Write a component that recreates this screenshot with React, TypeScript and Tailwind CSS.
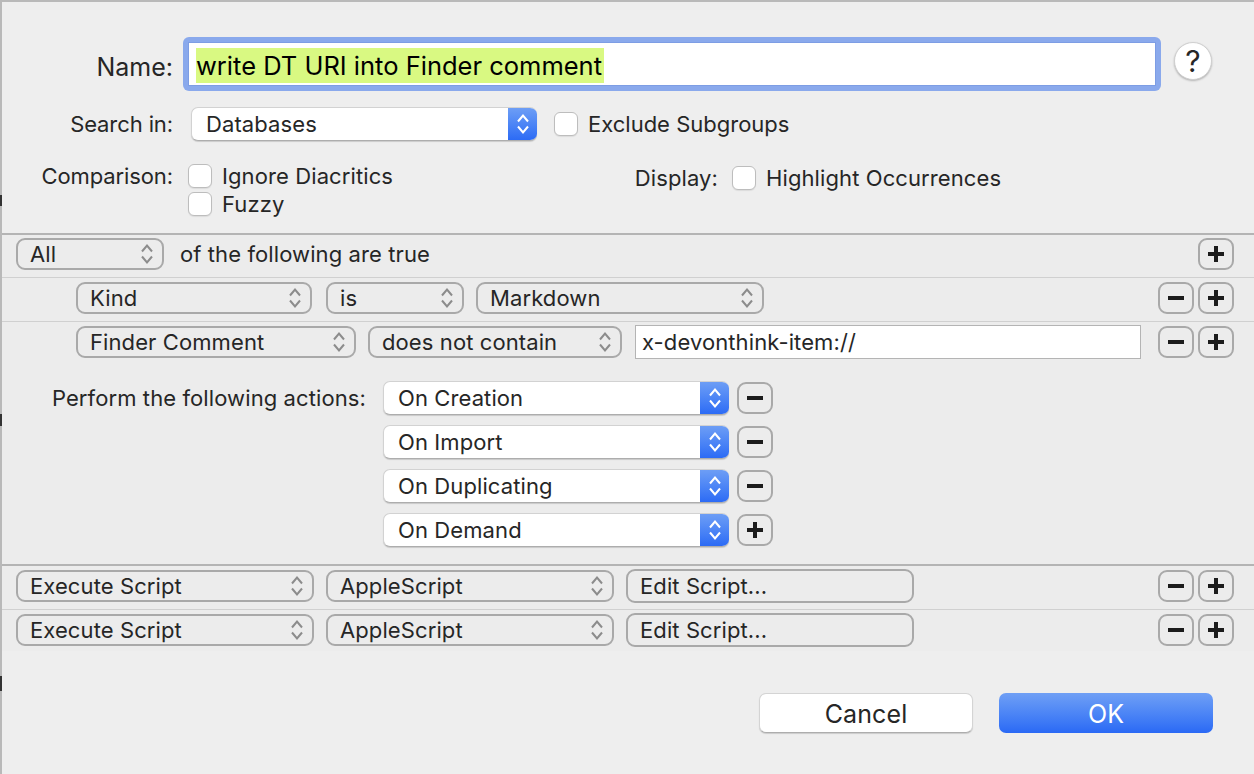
import React from 'react';

function Chevrons({ color = '#8c8c8c', strokeWidth = 2 }: { color?: string; strokeWidth?: number }) {
  return (
    <svg width="14" height="24" viewBox="0 0 14 24" fill="none" stroke={color} strokeWidth={strokeWidth}>
      <path d="M2 9.5 L7 3.5 L12 9.5" />
      <path d="M2 14.5 L7 20.5 L12 14.5" />
    </svg>
  );
}

function Select({ label, className }: { label: string; className: string }) {
  return (
    <div className={`h-[32px] border-2 border-[#a9a9a9] rounded-[9px] flex items-center justify-between pl-[12px] pr-[8px] ${className}`}>
      <span>{label}</span>
      <Chevrons />
    </div>
  );
}

function BlueSelect({ label }: { label: string }) {
  return (
    <div className="w-[346px] h-[34px] rounded-[7px] bg-white flex items-center justify-between border border-r-0 border-[#d2d2d2] border-b-[#adadad] shadow-[0_1px_1px_rgba(0,0,0,0.15)] overflow-hidden pl-[14px]">
      <span>{label}</span>
      <div className="w-[29px] h-[34px] bg-gradient-to-b from-[#6f9ff5] to-[#2a69f5] flex items-center justify-center">
        <Chevrons color="#ffffff" />
      </div>
    </div>
  );
}

function SmallBtn({ kind }: { kind: 'plus' | 'minus' }) {
  return (
    <div className="w-[36px] h-[32px] border-2 border-[#a9a9a9] rounded-[9px] flex items-center justify-center">
      <svg width="16" height="16" viewBox="0 0 16 16" fill="#1c1c1c">
        <rect x="0" y="6" width="16" height="4" />
        {kind === 'plus' && <rect x="6" y="0" width="4" height="16" />}
      </svg>
    </div>
  );
}

function Check({ label, className = '' }: { label: string; className?: string }) {
  return (
    <div className={`flex items-center h-[24px] ${className}`}>
      <div className="w-[24px] h-[24px] rounded-[6px] bg-white border border-[#bdbdbd] shadow-[0_1px_1px_rgba(0,0,0,0.08)]" />
      <span className="ml-[10px]">{label}</span>
    </div>
  );
}

function PlusMinus() {
  return (
    <div className="ml-auto flex gap-[4px]">
      <SmallBtn kind="minus" />
      <SmallBtn kind="plus" />
    </div>
  );
}

function EditBtn() {
  return (
    <div className="w-[288px] h-[34px] border-2 border-[#a9a9a9] rounded-[9px] flex items-center pl-[12px] ml-[12px]">
      Edit Script...
    </div>
  );
}

export default function App() {
  return (
    <div className="relative w-[1254px] h-[774px] bg-[#eeeeee] border-t-2 border-l-2 border-[#b9b9b9] text-[#262626] text-[22px] leading-none font-['Inter',sans-serif] tracking-[0.1px]">
      {/* bits of the window behind the sheet */}
      <div className="absolute left-[-2px] top-[193px] w-[2px] h-[11px] bg-[#333333]" />
      <div className="absolute left-[-2px] top-[412px] w-[2px] h-[12px] bg-[#333333]" />
      <div className="absolute left-[-2px] top-[674px] w-[2px] h-[15px] bg-[#333333]" />

      {/* name */}
      <div className="flex mt-[35px] h-[54px] items-center">
        <div className="w-[171px] text-right text-[25px] pt-[6px] tracking-normal">Name:</div>
        <div className="ml-[10px] w-[978px] h-[54px] rounded-[6px] bg-[#8aa9ec] p-[5px]">
          <div className="h-full bg-white border border-[#7d9de4] flex items-center pl-[7px]">
            <span className="bg-[#d9f982] text-[25.5px] text-black h-[35px] mt-[2px] pt-[2px] flex items-center pr-[2px] tracking-normal">write DT URI into Finder comment</span>
          </div>
        </div>
        <div className="ml-[13px] mb-[6px] w-[38px] h-[38px] rounded-full bg-white border border-[#d0d0d0] shadow-[0_1px_2px_rgba(0,0,0,0.25)] flex items-center justify-center text-[30px]">?</div>
      </div>

      {/* search in */}
      <div className="flex mt-[16px] h-[34px] items-center">
        <div className="w-[171px] text-right tracking-[-0.1px]">Search in:</div>
        <div className="ml-[18px]"><BlueSelect label="Databases" /></div>
        <Check label="Exclude Subgroups" className="ml-[17px] tracking-normal" />
      </div>

      {/* comparison */}
      <div className="flex mt-[23px]">
        <div className="w-[171px] h-[24px] flex items-center justify-end tracking-[-0.1px]">Comparison:</div>
        <div className="ml-[15px] w-[400px] flex flex-col gap-[4px]">
          <Check label="Ignore Diacritics" />
          <Check label="Fuzzy" />
        </div>
        <div className="flex mt-[2px] h-[24px] items-center">
          <div className="w-[130px] text-right">Display:</div>
          <Check label="Highlight Occurrences" className="ml-[14px]" />
        </div>
      </div>

      {/* criteria */}
      <div className="mt-[17px] bg-[#ececec] pr-[20px] border-t-2 border-[#b4b4b4] h-[44px] pb-[4px] pl-[14px] flex items-center">
        <Select label="All" className="w-[148px]" />
        <span className="ml-[16px]">of the following are true</span>
        <div className="ml-auto"><SmallBtn kind="plus" /></div>
      </div>
      <div className="bg-[#ececec] pr-[20px] border-t border-[#d0d0d0] h-[44px] pb-[3px] pl-[74px] flex items-center">
        <Select label="Kind" className="w-[236px]" />
        <Select label="is" className="w-[138px] ml-[14px]" />
        <Select label="Markdown" className="w-[288px] ml-[12px]" />
        <PlusMinus />
      </div>
      <div className="bg-[#ececec] border-t border-[#d0d0d0] pb-[17px]">
        <div className="h-[40px] pr-[20px] pl-[74px] flex items-center">
          <Select label="Finder Comment" className="w-[280px]" />
          <Select label="does not contain" className="w-[254px] ml-[12px]" />
          <div className="ml-[13px] w-[506px] h-[34px] bg-white border border-[#b4b4b4] flex items-center pl-[6px]">x-devonthink-item://</div>
          <PlusMinus />
        </div>
        <div className="mt-[19px] flex">
          <div className="w-[364px] h-[34px] flex items-center justify-end">Perform the following actions:</div>
          <div className="ml-[17px] flex flex-col gap-[10px]">
            {['On Creation', 'On Import', 'On Duplicating', 'On Demand'].map((t, i) => (
              <div key={t} className="flex items-center gap-[8px]">
                <BlueSelect label={t} />
                <SmallBtn kind={i === 3 ? 'plus' : 'minus'} />
              </div>
            ))}
          </div>
        </div>
      </div>

      {/* actions */}
      <div className="bg-[#ececec] pr-[20px] border-t-2 border-[#b4b4b4] h-[45px] pb-[3px] pl-[14px] flex items-center">
        <Select label="Execute Script" className="w-[298px]" />
        <Select label="AppleScript" className="w-[288px] ml-[12px]" />
        <EditBtn />
        <PlusMinus />
      </div>
      <div className="bg-[#ececec] pr-[20px] border-t border-[#d0d0d0] h-[42px] pb-[2px] pl-[14px] flex items-center">
        <Select label="Execute Script" className="w-[298px]" />
        <Select label="AppleScript" className="w-[288px] ml-[12px]" />
        <EditBtn />
        <PlusMinus />
      </div>

      {/* footer */}
      <div className="mt-[42px] flex pl-[757px] gap-[26px] text-[25px]">
        <div className="w-[214px] h-[40px] pt-[2px] rounded-[7px] bg-white border border-[#d4d4d4] border-b-[#adadad] shadow-[0_1px_1px_rgba(0,0,0,0.15)] flex items-center justify-center">Cancel</div>
        <div className="w-[214px] h-[40px] pt-[2px] rounded-[7px] bg-gradient-to-b from-[#6f9ff5] to-[#2a69f5] text-white flex items-center justify-center">OK</div>
      </div>
    </div>
  );
}
